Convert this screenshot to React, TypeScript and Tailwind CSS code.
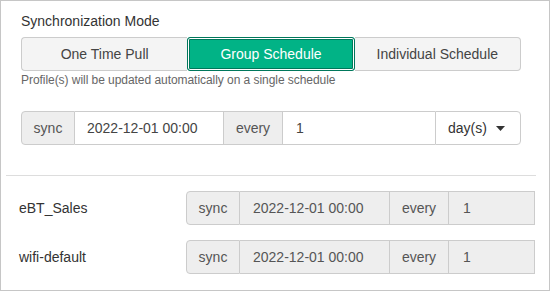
import React from "react";

const font = { fontFamily: '"Liberation Sans", Arial, sans-serif' };

type RowProps = { name: string; date: string; every: string };

const ScheduleRow = ({ name, date, every }: RowProps) => {
  return (
    <div className="flex items-center h-[34px]">
      <div className="w-[185px] pl-[18px] text-[14px] text-[#333]">{name}</div>
      <div className="flex h-[34px] w-[349px] text-[14px]">
        <span className="flex items-center justify-center w-[54px] border border-[#ccc] rounded-l-[4px] bg-[#eee] text-[#555]">
          sync
        </span>
        <span className="flex items-center w-[149px] pl-[13px] border-y border-[#ccc] bg-[#eee] text-[#555]">
          {date}
        </span>
        <span className="flex items-center justify-center w-[60px] border border-[#ccc] bg-[#eee] text-[#555]">
          every
        </span>
        <span className="flex items-center flex-1 pl-[14px] border-y border-r border-[#ccc] bg-[#eee] text-[#555]">
          {every}
        </span>
      </div>
    </div>
  );
};

export default function App() {
  const modes = ["One Time Pull", "Group Schedule", "Individual Schedule"];
  const active = 1;

  return (
    <div
      style={font}
      className="w-[550px] h-[291px] border border-[#c6c6c6] bg-white flex flex-col overflow-hidden"
    >
      <div className="px-[20px] pt-[10px]">
        <div className="text-[14px] leading-[20px] text-[#333]">Synchronization Mode</div>
        <div className="flex mt-[6px] h-[34px] w-[500px]">
          {modes.map((m, i) => (
            <button
              key={m}
              type="button"
              className={`flex-1 flex items-center justify-center text-[14px] border ${
                i === active
                  ? "bg-[#01b386] text-white border-[#00775b] shadow-[inset_0_0_0_1px_#ffffff,inset_0_0_0_2px_#00775b] rounded-[3px]"
                  : "bg-[#f4f4f4] text-[#444] border-[#ccc]"
              } ${i === 0 ? "rounded-l-[4px] border-r-0" : ""} ${
                i === 2 ? "rounded-r-[4px] border-l-0" : ""
              }`}
            >
              {m}
            </button>
          ))}
        </div>
        <div className="mt-[1px] text-[12px] leading-[17px] text-[#666] tracking-[-0.05px]">
          Profile(s) will be updated automatically on a single schedule
        </div>
        <div className="flex mt-[22px] h-[34px] w-[500px] text-[14px]">
          <span className="flex items-center justify-center w-[54px] border border-[#ccc] rounded-l-[4px] bg-[#eee] text-[#555]">
            sync
          </span>
          <span className="flex items-center w-[148px] pl-[12px] border-y border-[#ccc] bg-white text-[#444]">
            2022-12-01 00:00
          </span>
          <span className="flex items-center justify-center w-[60px] border border-[#ccc] bg-[#eee] text-[#555]">
            every
          </span>
          <span className="flex items-center w-[152px] pl-[13px] border-y border-[#ccc] bg-white text-[#444]">
            1
          </span>
          <span className="flex items-center flex-1 pl-[12px] gap-[9px] border border-[#ccc] rounded-r-[4px] bg-white text-[#333]">
            day(s)
            <svg width="9" height="5" viewBox="0 0 9 5">
              <path d="M0 0h9L4.5 5z" fill="#333" />
            </svg>
          </span>
        </div>
      </div>
      <div className="ml-[5px] w-[530px] mt-[30px] border-t border-[#ddd]" />
      <div className="flex flex-col gap-[15px] mt-[15px]">
        <ScheduleRow name="eBT_Sales" date="2022-12-01 00:00" every="1" />
        <ScheduleRow name="wifi-default" date="2022-12-01 00:00" every="1" />
      </div>
    </div>
  );
}
